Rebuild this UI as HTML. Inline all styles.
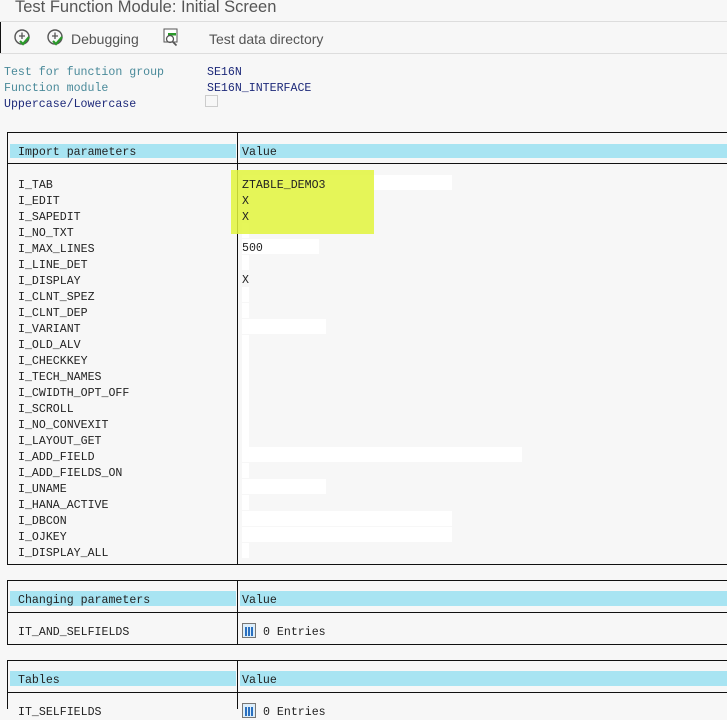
<!DOCTYPE html>
<html><head><meta charset="utf-8"><style>
*{margin:0;padding:0;box-sizing:border-box}
body{width:727px;height:709px;background:#f7f7f7;position:relative;overflow:hidden;font-family:"Liberation Mono",monospace;font-size:11.6px;color:#222}
.a{position:absolute;white-space:pre;line-height:14px;margin-top:2px}
.s{font-family:"Liberation Sans",sans-serif}
.hl{position:absolute;background:#a8e4f2;height:14px}
.f{position:absolute;background:#fff;height:15px}
.b{position:absolute;background:#111}
</style></head><body>
<div class="a s" style="left:15px;top:-5px;font-size:16.5px;line-height:20px;color:#555">Test Function Module: Initial Screen</div>
<div style="position:absolute;left:0;top:21px;width:727px;height:1px;background:#ddd"></div>
<div style="position:absolute;left:0;top:53px;width:727px;height:1px;background:#ddd"></div>
<div class="b" style="left:0;top:22px;width:1px;height:31px"></div>
<svg style="position:absolute;left:13px;top:28px" width="22" height="20" viewBox="0 0 22 20"><circle cx="9" cy="9" r="7" fill="none" stroke="#555" stroke-width="1.4"/><path d="M9 4.5v6.5M6 8h6" stroke="#555" stroke-width="1.3" fill="none"/><path d="M7 13l3 3 6-7" stroke="#2a9a2a" stroke-width="2.2" fill="none"/></svg>
<svg style="position:absolute;left:46px;top:28px" width="22" height="20" viewBox="0 0 22 20"><circle cx="9" cy="9" r="7" fill="none" stroke="#555" stroke-width="1.4"/><path d="M9 4.5v6.5M6 8h6" stroke="#555" stroke-width="1.3" fill="none"/><path d="M7 13l3 3 6-7" stroke="#2a9a2a" stroke-width="2.2" fill="none"/></svg>
<div class="a s" style="left:71px;top:29px;font-size:14px;line-height:16px;color:#555">Debugging</div>
<svg style="position:absolute;left:162px;top:28px" width="20" height="20" viewBox="0 0 20 20"><rect x="2" y="1" width="13" height="13" fill="#fff" stroke="#555"/><rect x="6" y="5" width="8" height="2.5" fill="#2a9a2a"/><circle cx="8" cy="11" r="3.5" fill="none" stroke="#555" stroke-width="1.3"/><path d="M10.5 13.5l4 4" stroke="#555" stroke-width="1.6"/></svg>
<div class="a s" style="left:209px;top:29px;font-size:14px;line-height:16px;color:#555">Test data directory</div>
<div class="a" style="left:4px;top:64px;color:#4a8a9a">Test for function group</div>
<div class="a" style="left:4px;top:80px;color:#4a8a9a">Function module</div>
<div class="a" style="left:4px;top:96px;color:#1e2a7a">Uppercase/Lowercase</div>
<div class="a" style="left:207px;top:64px;color:#1e2a7a">SE16N</div>
<div class="a" style="left:207px;top:80px;color:#1e2a7a">SE16N_INTERFACE</div>
<div style="position:absolute;left:205px;top:95px;width:13px;height:12px;border:1px solid #ccc;background:#f7f7f7"></div>

<div class="b" style="left:7px;top:132px;width:720px;height:1px"></div>
<div class="b" style="left:7px;top:163px;width:720px;height:1px"></div>
<div class="b" style="left:7px;top:564px;width:720px;height:1px"></div>
<div class="b" style="left:7px;top:132px;width:1px;height:433px"></div>
<div class="b" style="left:237px;top:132px;width:1px;height:433px"></div>
<div class="hl" style="left:10px;top:144px;width:226px"></div>
<div class="hl" style="left:240px;top:144px;width:487px"></div>
<div class="a" style="left:18px;top:144px">Import parameters</div>
<div class="a" style="left:242px;top:144px">Value</div>

<div class="f" style="left:242px;top:175px;width:210px"></div>
<div class="f" style="left:242px;top:239px;width:77px"></div>
<div class="f" style="left:242px;top:223px;width:7px"></div>
<div class="f" style="left:242px;top:255px;width:7px"></div>
<div class="f" style="left:242px;top:287px;width:7px"></div>
<div class="f" style="left:242px;top:303px;width:7px"></div>
<div class="f" style="left:242px;top:319px;width:84px"></div>
<div class="f" style="left:242px;top:335px;width:7px;height:112px"></div>
<div class="f" style="left:242px;top:447px;width:280px"></div>
<div class="f" style="left:242px;top:463px;width:7px"></div>
<div class="f" style="left:242px;top:479px;width:84px"></div>
<div class="f" style="left:242px;top:495px;width:7px"></div>
<div class="f" style="left:242px;top:511px;width:210px"></div>
<div class="f" style="left:242px;top:527px;width:210px"></div>
<div class="f" style="left:242px;top:543px;width:7px"></div>
<div style="position:absolute;left:231px;top:170px;width:143px;height:64px;background:rgba(226,245,60,0.85)"></div>
<div class="a" style="left:242px;top:176px;line-height:16px">ZTABLE_DEMO3
X
X</div>
<div class="a" style="left:242px;top:240px">500</div>
<div class="a" style="left:242px;top:272px">X</div>
<div class="a" style="left:18px;top:176px;line-height:16px">I_TAB
I_EDIT
I_SAPEDIT
I_NO_TXT
I_MAX_LINES
I_LINE_DET
I_DISPLAY
I_CLNT_SPEZ
I_CLNT_DEP
I_VARIANT
I_OLD_ALV
I_CHECKKEY
I_TECH_NAMES
I_CWIDTH_OPT_OFF
I_SCROLL
I_NO_CONVEXIT
I_LAYOUT_GET
I_ADD_FIELD
I_ADD_FIELDS_ON
I_UNAME
I_HANA_ACTIVE
I_DBCON
I_OJKEY
I_DISPLAY_ALL</div>

<div class="b" style="left:7px;top:580px;width:720px;height:1px"></div>
<div class="b" style="left:7px;top:612px;width:720px;height:1px"></div>
<div class="b" style="left:7px;top:644px;width:720px;height:1px"></div>
<div class="b" style="left:7px;top:580px;width:1px;height:65px"></div>
<div class="b" style="left:237px;top:580px;width:1px;height:65px"></div>
<div class="hl" style="left:10px;top:591px;width:226px;height:15px"></div>
<div class="hl" style="left:240px;top:591px;width:487px;height:15px"></div>
<div class="a" style="left:18px;top:592px">Changing parameters</div>
<div class="a" style="left:242px;top:592px">Value</div>
<div class="a" style="left:18px;top:624px">IT_AND_SELFIELDS</div>
<svg style="position:absolute;left:242px;top:623px" width="14" height="15" viewBox="0 0 14 15"><rect x=".5" y=".5" width="13" height="14" fill="#ddeefa" stroke="#777"/><rect x="3" y="4" width="2" height="9" fill="#2a70c0"/><rect x="6" y="4" width="2" height="9" fill="#2a70c0"/><rect x="9" y="4" width="2" height="9" fill="#2a70c0"/></svg>
<div class="a" style="left:263px;top:624px">0 Entries</div>

<div class="b" style="left:7px;top:660px;width:720px;height:1px"></div>
<div class="b" style="left:7px;top:692px;width:720px;height:1px"></div>
<div class="b" style="left:7px;top:660px;width:1px;height:49px"></div>
<div class="b" style="left:237px;top:660px;width:1px;height:49px"></div>
<div class="hl" style="left:10px;top:671px;width:226px;height:15px"></div>
<div class="hl" style="left:240px;top:671px;width:487px;height:15px"></div>
<div class="a" style="left:18px;top:672px">Tables</div>
<div class="a" style="left:242px;top:672px">Value</div>
<div class="a" style="left:18px;top:704px">IT_SELFIELDS</div>
<svg style="position:absolute;left:242px;top:703px" width="14" height="15" viewBox="0 0 14 15"><rect x=".5" y=".5" width="13" height="14" fill="#ddeefa" stroke="#777"/><rect x="3" y="4" width="2" height="9" fill="#2a70c0"/><rect x="6" y="4" width="2" height="9" fill="#2a70c0"/><rect x="9" y="4" width="2" height="9" fill="#2a70c0"/></svg>
<div class="a" style="left:263px;top:704px">0 Entries</div>
</body></html>
